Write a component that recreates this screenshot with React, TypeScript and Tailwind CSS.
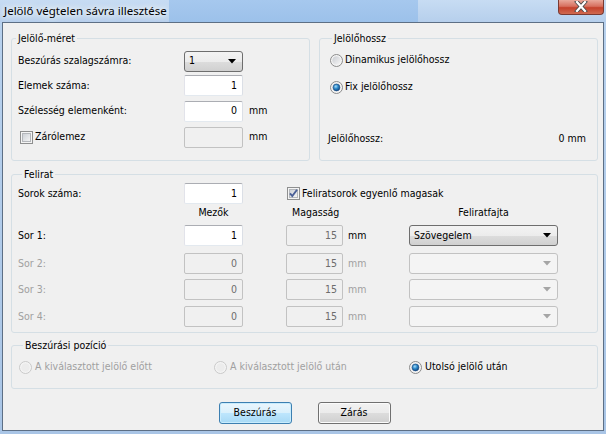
import React from "react";

function TextBox({ value, disabled, w }: { value?: string; disabled?: boolean; w: string }) {
  if (disabled) {
    return (
      <div className={`${w} h-[21px] shrink-0 rounded-[2px] border border-[#c2c2c2] bg-[#f0f0f0] flex items-center justify-end pr-[5px] text-[#6d6d6d]`}>
        {value}
      </div>
    );
  }
  return (
    <div className={`${w} h-[21px] shrink-0 rounded-[2px] border border-[#abadb3] border-l-[#e2e3ea] border-r-[#dbdfe6] border-b-[#e3e9ef] bg-white flex items-center justify-end pr-[5px] text-black`}>
      {value}
    </div>
  );
}

function Arrow({ disabled }: { disabled?: boolean }) {
  return (
    <svg width="8" height="5" viewBox="0 0 8 5" className="shrink-0">
      <path d="M0 0 H8 L4 4.5 Z" fill={disabled ? "#a5a5a5" : "#000"} />
    </svg>
  );
}

function Combo({ value, w, disabled }: { value?: string; w: string; disabled?: boolean }) {
  if (disabled) {
    return (
      <div className={`${w} h-[21px] shrink-0 rounded-[3px] border border-[#c2c2c2] bg-[#f4f4f4] flex items-center justify-end pr-[6px]`}>
        <Arrow disabled />
      </div>
    );
  }
  return (
    <div className={`${w} h-[21px] shrink-0 rounded-[3px] border border-[#6e6e6e] bg-[linear-gradient(to_bottom,#f3f3f3_0%,#ececec_50%,#dddddd_50%,#d0d0d0_100%)] flex items-center pl-[4px] pr-[6px] text-black`}>
      <span className="flex-1">{value}</span>
      <Arrow />
    </div>
  );
}

function CheckBox({ checked }: { checked?: boolean }) {
  return (
    <svg width="13" height="13" viewBox="0 0 13 13" className="shrink-0">
      <defs>
        <linearGradient id="cbg" x1="0" y1="0" x2="1" y2="1">
          <stop offset="0" stopColor="#cbcfd5" />
          <stop offset="1" stopColor="#f6f6f6" />
        </linearGradient>
      </defs>
      <rect x="0.5" y="0.5" width="12" height="12" fill="#f4f4f4" stroke="#8e8f8f" />
      <rect x="2.5" y="2.5" width="8" height="8" fill="url(#cbg)" stroke="#b4b7bb" strokeWidth="1" />
      {checked && (
        <path d="M3 6.3 L5.3 9 L10 2.8" fill="none" stroke="#4a5f97" strokeWidth="1.9" strokeLinejoin="miter" />
      )}
    </svg>
  );
}

function Radio({ checked, disabled }: { checked?: boolean; disabled?: boolean }) {
  return (
    <svg width="13" height="13" viewBox="0 0 13 13" className="shrink-0">
      <defs>
        <linearGradient id="rbg" x1="0" y1="0" x2="1" y2="1">
          <stop offset="0" stopColor="#c9ccd1" />
          <stop offset="1" stopColor="#f7f7f7" />
        </linearGradient>
        <radialGradient id="rdot" cx="0.4" cy="0.35" r="0.7">
          <stop offset="0" stopColor="#a8dbf7" />
          <stop offset="0.45" stopColor="#2f8ccc" />
          <stop offset="1" stopColor="#0c3f78" />
        </radialGradient>
      </defs>
      <circle cx="6.5" cy="6.5" r="6" fill="#f4f4f4" stroke={disabled ? "#c9c9c9" : "#8b8b8b"} />
      <circle cx="6.5" cy="6.5" r="4.3" fill={disabled ? "#ececec" : "url(#rbg)"} />
      {checked && <circle cx="6.5" cy="6.5" r="3.4" fill="url(#rdot)" stroke="#1b4a82" strokeWidth="0.6" />}
    </svg>
  );
}

function Group({ title, className, children }: { title: string; className: string; children: React.ReactNode }) {
  return (
    <fieldset className={`rounded-[3px] border border-[#d5dfe5] ${className}`}>
      <legend className="ml-[4px] px-[2px] leading-[14px]">{title}</legend>
      {children}
    </fieldset>
  );
}

export default function App() {
  const rows = ["Sor 2:", "Sor 3:", "Sor 4:"];
  const rowMt = ["mt-[7px]", "mt-[5px]", "mt-[6px]"];
  return (
    <div className="w-[606px] h-[434px] flex flex-col bg-[linear-gradient(to_bottom,#b9d2ee,#a9c5e6)] overflow-hidden font-['DejaVu_Sans_Condensed','Liberation_Sans',sans-serif] text-[10.5px] text-black">
      {/* Title bar */}
      <div className="h-[22px] shrink-0 flex bg-[linear-gradient(to_bottom,#c7dcf3,#b6cfec)]">
        <div className="h-full flex items-center pl-[4px] pr-[2px] font-['Noto_Sans',sans-serif] text-[11.5px] text-black [text-shadow:0_0_5px_#fff,0_0_9px_#fff,0_0_12px_#eaf3fc]">
          Jelölő végtelen sávra illesztése
        </div>
        <div className="w-[249px] h-full bg-[linear-gradient(to_bottom,#a6c8ee,#9cc1ea)]" />
        <div className="flex-1" />
        <div className="w-[46px] h-[15px] mr-[2px] rounded-b-[4px] border border-t-0 border-[#7a3a32] bg-[linear-gradient(to_bottom,#e9a99b_0%,#d7705f_45%,#c4412c_55%,#d06a50_100%)] flex items-start justify-center">
          <svg width="14" height="11" viewBox="0 0 14 11" className="mt-[1px]">
            <path d="M3 1 L11 10 M11 1 L3 10" stroke="#4a4a4a" strokeWidth="4" strokeLinecap="square" />
            <path d="M3 1 L11 10 M11 1 L3 10" stroke="#fff" strokeWidth="2.2" strokeLinecap="square" />
          </svg>
        </div>
      </div>

      {/* Client area */}
      <div className="flex-1 ml-[2px] mr-[2px] mb-[3px] border border-[#5d6f85] bg-[#f0f0f0] pl-[8px] pr-[5px] pt-[8px] flex flex-col">
        <div className="flex gap-[9px]">
          <Group title="Jelölő-méret" className="w-[299px] h-[130px] pt-[4px]">
            <div className="flex items-center h-[24px] pl-[6px]">
              <div className="w-[166px]">Beszúrás szalagszámra:</div>
              <Combo value="1" w="w-[59px]" />
            </div>
            <div className="flex items-center h-[25px] pl-[6px]">
              <div className="w-[166px]">Elemek száma:</div>
              <TextBox value="1" w="w-[59px]" />
            </div>
            <div className="flex items-center h-[26px] pl-[6px]">
              <div className="w-[166px]">Szélesség elemenként:</div>
              <TextBox value="0" w="w-[59px]" />
              <span className="ml-[6px]">mm</span>
            </div>
            <div className="flex items-center h-[26px] pl-[8px]">
              <div className="w-[164px] flex items-center gap-[2px]">
                <CheckBox />
                <span>Zárólemez</span>
              </div>
              <TextBox disabled w="w-[59px]" />
              <span className="ml-[6px]">mm</span>
            </div>
          </Group>

          <Group title="Jelölőhossz" className="w-[279px] h-[130px] pt-[4px] pl-[8px] pr-[11px] pb-[10px] flex flex-col">
            <div className="flex items-center h-[22px] pl-[2px] gap-[2px]">
              <Radio />
              <span>Dinamikus jelölőhossz</span>
            </div>
            <div className="flex items-center h-[22px] mt-[5px] pl-[2px] gap-[2px]">
              <Radio checked />
              <span>Fix jelölőhossz</span>
            </div>
            <div className="flex-1" />
            <div className="flex items-center justify-between h-[22px]">
              <span>Jelölőhossz:</span>
              <span>0 mm</span>
            </div>
          </Group>
        </div>

        <Group title="Felirat" className="mt-[6px] h-[166px] pl-[6px] pt-[2px]">
          <div className="flex items-center h-[21px]">
            <div className="w-[166px]">Sorok száma:</div>
            <TextBox value="1" w="w-[59px]" />
            <div className="ml-[44px] flex items-center gap-[2px]">
              <CheckBox checked />
              <span>Feliratsorok egyenlő magasak</span>
            </div>
          </div>
          <div className="flex items-center h-[14px] mt-[2px]">
            <div className="w-[166px]" />
            <div className="w-[59px] text-center">Mezők</div>
            <div className="w-[43px]" />
            <div className="w-[57px] pl-[6px]">Magasság</div>
            <div className="w-[66px]" />
            <div className="w-[149px] text-center">Feliratfajta</div>
          </div>
          <div className="flex items-center h-[21px] mt-[5px]">
            <div className="w-[166px]">Sor 1:</div>
            <TextBox value="1" w="w-[59px]" />
            <div className="w-[43px]" />
            <TextBox value="15" disabled w="w-[57px]" />
            <div className="w-[66px] pl-[5px]">mm</div>
            <Combo value="Szövegelem" w="w-[149px]" />
          </div>
          {rows.map((r, i) => (
            <div key={r} className={`flex items-center h-[21px] ${rowMt[i]}`}>
              <div className="w-[166px] text-[#a0a0a0]">{r}</div>
              <TextBox value="0" disabled w="w-[59px]" />
              <div className="w-[43px]" />
              <TextBox value="15" disabled w="w-[57px]" />
              <div className="w-[66px] pl-[5px] text-[#a0a0a0]">mm</div>
              <Combo disabled w="w-[149px]" />
            </div>
          ))}
        </Group>

        <Group title="Beszúrási pozíció" className="mt-[5px] h-[51px] pt-[4px] pl-[7px]">
          <div className="flex items-center h-[22px]">
            <div className="w-[195px] flex items-center gap-[3px] text-[#a0a0a0]">
              <Radio disabled />
              <span>A kiválasztott jelölő előtt</span>
            </div>
            <div className="w-[195px] flex items-center gap-[3px] text-[#a0a0a0]">
              <Radio disabled />
              <span>A kiválasztott jelölő után</span>
            </div>
            <div className="flex items-center gap-[3px]">
              <Radio checked />
              <span>Utolsó jelölő után</span>
            </div>
          </div>
        </Group>

        <div className="flex justify-center gap-[26px] mt-[13px]">
          <div className="w-[73px] h-[22px] rounded-[3px] border border-[#3c7fb1] shadow-[inset_0_0_0_1px_#c8ecfd] bg-[linear-gradient(to_bottom,#eaf6fd_0%,#d9f0fc_50%,#bee6fd_50%,#a7d9f5_100%)] flex items-center justify-center">
            Beszúrás
          </div>
          <div className="w-[73px] h-[22px] rounded-[3px] border border-[#707070] shadow-[inset_0_0_0_1px_#fbfbfb] bg-[linear-gradient(to_bottom,#f2f2f2_0%,#ebebeb_50%,#dddddd_50%,#cfcfcf_100%)] flex items-center justify-center">
            Zárás
          </div>
        </div>
      </div>
    </div>
  );
}
